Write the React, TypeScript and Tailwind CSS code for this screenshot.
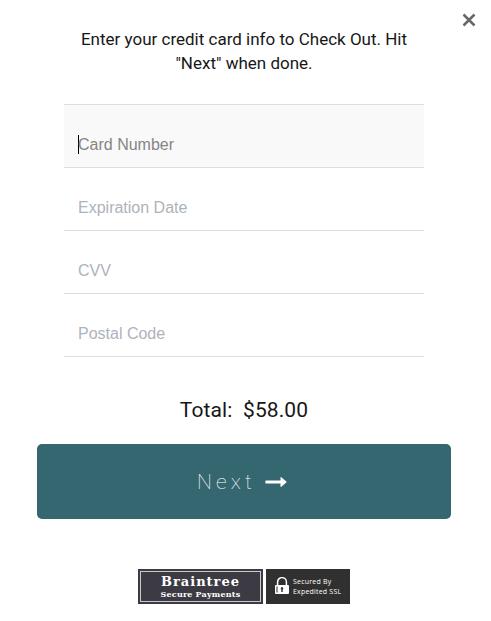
const laterFields = ["Expiration Date", "CVV", "Postal Code"];

function CloseIcon() {
  return (
    <svg viewBox="0 0 14 14" className="block h-3.5 w-3.5" fill="none" stroke="#686868" strokeWidth="2.5">
      <path d="M1.5 1.5 12.5 12.5M12.5 1.5 1.5 12.5" />
    </svg>
  );
}

function ArrowIcon() {
  return (
    <svg viewBox="0 0 22 12" className="block h-3 w-[22px]" fill="#fff">
      <path d="M1 4.4h14.5V1.6q0-1 .8-.4l5 4.2q.6.6 0 1.2l-5 4.2q-.8.6-.8-.4V7.6H1q-.6 0-.6-.6V5q0-.6.6-.6z" />
    </svg>
  );
}

function LockIcon() {
  return (
    <svg viewBox="0 0 14 18" className="mb-px block h-[18px] w-3.5 shrink-0">
      <path d="M2.6 8V5a4.4 4.4 0 0 1 8.8 0v3" fill="none" stroke="#fff" strokeWidth="1.5" />
      <rect x="0" y="8" width="14" height="9" rx="1" fill="#fff" />
      <path d="M2 9.5v6" stroke="#303030" strokeWidth="1" />
      <path d="M7 10v5M5.8 11.6h2.4" stroke="#303030" strokeWidth="1.4" />
    </svg>
  );
}

function Field({ label }: { label: string }) {
  return (
    <div className="flex h-[63px] items-center border-b border-[#dedede] px-3.5 pt-[18px] text-base text-[#aeb3b9]">
      {label}
    </div>
  );
}

export default function App() {
  return (
    <main className="flex h-[621px] w-[491px] flex-col overflow-hidden bg-white font-[Roboto,sans-serif] text-[#171717]">
      <header className="flex h-[27px] shrink-0 justify-end pt-[13px] pr-[15px]">
        <button aria-label="Close" className="h-3.5 w-3.5">
          <CloseIcon />
        </button>
      </header>
      <h1 className="w-[488px] text-center text-[17px] leading-6 font-normal">
        Enter your credit card info to Check Out. Hit
        <br />
        "Next" when done.
      </h1>
      <form className="mt-[29px] ml-16 w-[360px] border-t border-[#dedede] font-['Liberation_Sans',Arial,sans-serif]">
        <div className="flex h-[63px] items-center border-b border-[#dedede] bg-[#f9f9f9] px-3.5 pt-[18px] text-base text-[#858585]">
          <span className="mb-0.5 h-[19px] w-px bg-black" />
          <span className="-ml-px">Card Number</span>
        </div>
        {laterFields.map((label) => (
          <Field key={label} label={label} />
        ))}
      </form>
      <p className="mt-9 w-[488px] text-center text-[21px] leading-[34px] tracking-[0.1px] whitespace-pre">
        {"Total:  $58.00"}
      </p>
      <button className="mt-[17px] ml-[37px] flex h-[75px] w-[414px] shrink-0 items-center rounded-[5px] bg-[#356770] pl-40 text-[21px] font-thin tracking-[4.2px] text-white">
        <span className="pt-0.5">Next</span>
        <span className="ml-[9px]">
          <ArrowIcon />
        </span>
      </button>
      <footer className="mt-[50px] ml-[138px] flex gap-[3px]">
        <div className="h-[35px] w-[125px] bg-[#3c3a42] p-0.5">
          <div className="flex h-full flex-col items-center border border-[#c9c8cc] font-['DejaVu_Serif',serif] font-bold text-white">
            <span className="mt-0.5 text-[13px] leading-4 tracking-[1px]">Braintree</span>
            <span className="text-[8px] leading-[9px] tracking-[0.2px] whitespace-nowrap">Secure Payments</span>
          </div>
        </div>
        <div className="flex h-[35px] w-[84px] items-center bg-[#303030] pl-[9px] text-white">
          <LockIcon />
          <div className="ml-1 flex flex-col font-['Open_Sans',sans-serif] text-[7px] leading-[10px] tracking-[0.2px] whitespace-nowrap">
            <span>Secured By</span>
            <span>Expedited SSL</span>
          </div>
        </div>
      </footer>
    </main>
  );
}
